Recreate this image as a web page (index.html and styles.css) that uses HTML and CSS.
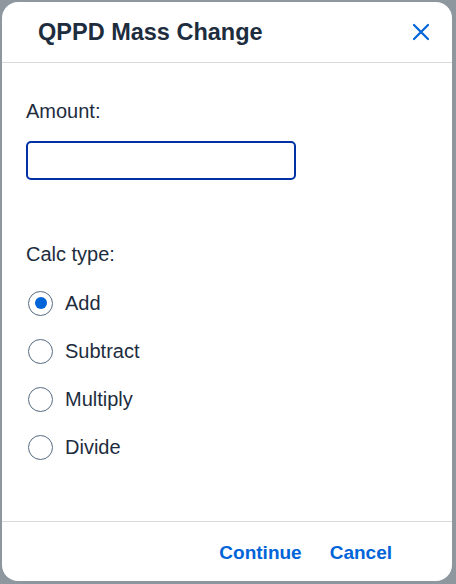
FILE: index.html
```html
<!DOCTYPE html>
<html>
<head>
<meta charset="utf-8">
<link rel="stylesheet" href="styles.css">
</head>
<body>
<div class="dialog">
  <header class="dlg-header">
    <h1 class="dlg-title">QPPD Mass Change</h1>
    <button class="close-btn" aria-label="Close">
      <svg width="18" height="18" viewBox="0 0 18 18"><path d="M2 2L16 16M16 2L2 16" stroke="#0064d9" stroke-width="2.2" stroke-linecap="round" fill="none"/></svg>
    </button>
  </header>
  <main class="dlg-content">
    <label class="field-label">Amount:</label>
    <input class="amount-input" type="text">
    <div class="field-label calc-label">Calc type:</div>
    <div class="radio-group">
      <div class="radio-row"><span class="radio checked"></span><span class="radio-text">Add</span></div>
      <div class="radio-row"><span class="radio"></span><span class="radio-text">Subtract</span></div>
      <div class="radio-row"><span class="radio"></span><span class="radio-text">Multiply</span></div>
      <div class="radio-row"><span class="radio"></span><span class="radio-text">Divide</span></div>
    </div>
  </main>
  <footer class="dlg-footer">
    <button class="link-btn">Continue</button>
    <button class="link-btn">Cancel</button>
  </footer>
</div>
</body>
</html>
```
FILE: styles.css
```css
html, body {
  margin: 0;
  height: 100%;
}
body {
  background: #8e969e;
  padding: 2px 4px 3px 2px;
  box-sizing: border-box;
  font-family: "Liberation Sans", Arial, sans-serif;
  color: #1d2d3e;
}
.dialog {
  background: #fff;
  border-radius: 16px;
  height: 100%;
  display: flex;
  flex-direction: column;
  overflow: hidden;
}
.dlg-header {
  height: 60px;
  border-bottom: 1px solid #d9d9d9;
  display: flex;
  align-items: center;
  justify-content: space-between;
  padding: 0 19px 0 36px;
  flex: none;
}
.dlg-title {
  margin: 0;
  font-size: 23.5px;
  font-weight: bold;
  color: #1d2d3e;
}
.close-btn {
  border: none;
  background: none;
  padding: 0;
  width: 24px;
  height: 24px;
  display: flex;
  align-items: center;
  justify-content: center;
}
.dlg-content {
  flex: 1;
  padding: 37px 24px 0 24px;
  display: flex;
  flex-direction: column;
  align-items: flex-start;
}
.field-label {
  font-size: 20px;
  line-height: 23px;
  color: #1d2d3e;
}
.amount-input {
  margin-top: 18px;
  width: 270px;
  height: 39px;
  box-sizing: border-box;
  border: 2.5px solid #0032a5;
  border-radius: 5px;
  outline: none;
}
.calc-label {
  margin-top: 63px;
}
.radio-group {
  margin-top: 13px;
  display: flex;
  flex-direction: column;
}
.radio-row {
  height: 48px;
  display: flex;
  align-items: center;
}
.radio {
  width: 25px;
  height: 25px;
  box-sizing: border-box;
  border: 1.5px solid #556b82;
  border-radius: 50%;
  margin-left: 2px;
  margin-right: 12px;
  display: flex;
  align-items: center;
  justify-content: center;
}
.radio.checked::after {
  content: "";
  width: 12px;
  height: 12px;
  border-radius: 50%;
  background: #0064d9;
}
.radio-text {
  font-size: 20px;
  color: #1d2d3e;
}
.dlg-footer {
  height: 60px;
  border-top: 1px solid #d9d9d9;
  flex: none;
  display: flex;
  align-items: center;
  justify-content: flex-end;
  padding-right: 60px;
  padding-top: 2px;
  box-sizing: border-box;
  gap: 28px;
}
.link-btn {
  border: none;
  background: none;
  padding: 0;
  font-family: "Liberation Sans", Arial, sans-serif;
  font-size: 19px;
  font-weight: bold;
  color: #0064d9;
}
```
